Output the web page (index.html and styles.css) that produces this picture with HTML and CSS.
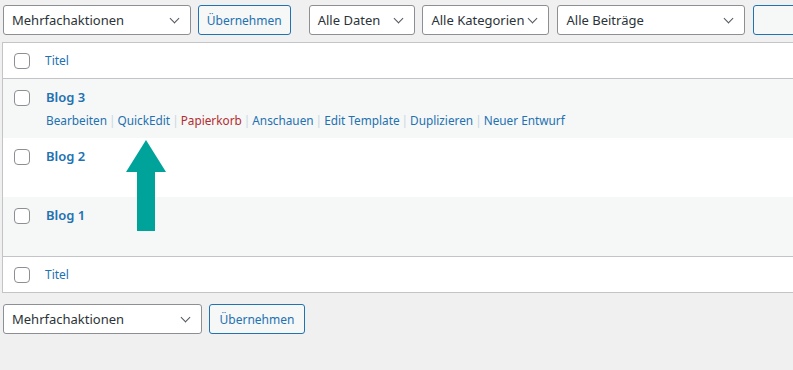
FILE: index.html
```html
<!DOCTYPE html>
<html lang="de">
<head>
  <meta charset="UTF-8">
  <meta name="viewport" content="width=device-width, initial-scale=1.0">
  <title>Beiträge</title>
  <link rel="stylesheet" href="styles.css">
</head>
<body>
  <div class="page">
    <div class="tablenav top">
      <div class="select wide">Mehrfachaktionen</div>
      <button class="button">Übernehmen</button>
      <div class="select dates">Alle Daten</div>
      <div class="select cats">Alle Kategorien</div>
      <div class="select posts">Alle Beiträge</div>
      <button class="button stub"></button>
    </div>

    <div class="list">
      <div class="row head">
        <span class="check"></span>
        <span class="col-title">Titel</span>
      </div>

      <div class="row item alt">
        <span class="check"></span>
        <div class="col-title">
          <a class="title">Blog 3</a>
          <div class="actions"><a>Bearbeiten</a><span class="sep">|</span><a>QuickEdit</a><span class="sep">|</span><a class="trash">Papierkorb</a><span class="sep">|</span><a>Anschauen</a><span class="sep">|</span><a>Edit Template</a><span class="sep">|</span><a>Duplizieren</a><span class="sep">|</span><a>Neuer Entwurf</a></div>
        </div>
      </div>

      <div class="row item">
        <span class="check"></span>
        <div class="col-title"><a class="title">Blog 2</a></div>
      </div>

      <div class="row item alt">
        <span class="check"></span>
        <div class="col-title"><a class="title">Blog 1</a></div>
      </div>

      <div class="row head foot">
        <span class="check"></span>
        <span class="col-title">Titel</span>
      </div>
    </div>

    <div class="tablenav bottom">
      <div class="select wide">Mehrfachaktionen</div>
      <button class="button">Übernehmen</button>
    </div>

    <!-- hint arrow pointing at QuickEdit -->
    <svg class="arrow" width="42" height="92" viewBox="0 0 42 92">
      <polygon points="21,0 41,32 30,32 30,91 12,91 12,32 1,32" fill="#00a39a"/>
    </svg>
  </div>
</body>
</html>
```

FILE: styles.css
```css
body {
  margin: 0;
  background: #f0f0f1;
  overflow: hidden;
  font-family: "Noto Sans", "Open Sans", sans-serif;
  font-size: 12px;
  color: #2c3338;
}

.page {
  position: relative;
  width: 860px;
  padding-left: 2px;
}

.tablenav {
  display: flex;
  align-items: center;
  white-space: nowrap;
}

.tablenav.top {
  padding: 5px 0 0 1px;
  margin-bottom: 7px;
}

.tablenav.bottom {
  padding: 11px 0 0 1px;
}

.select {
  box-sizing: border-box;
  height: 30px;
  line-height: 28px;
  padding: 0 24px 0 8px;
  background: #fff;
  border: 1px solid #8c8f94;
  border-radius: 3px;
  font-size: 13px;
  color: #2c3338;
  position: relative;
  margin-right: 7px;
}

.select::after {
  content: "";
  position: absolute;
  right: 12px;
  top: 9px;
  width: 6px;
  height: 6px;
  border-right: 1.4px solid #50575e;
  border-bottom: 1.4px solid #50575e;
  transform: rotate(45deg);
}

.select.wide { width: 199px; }
.select.dates { width: 112px; }
.select.cats { width: 129px; margin-right: 8px; }
.select.posts { width: 199px; margin-right: 8px; }

.button {
  box-sizing: border-box;
  height: 30px;
  padding: 0 8px;
  background: #f6f7f7;
  border: 1px solid #2271b1;
  border-radius: 3px;
  color: #2271b1;
  font-family: inherit;
  font-size: 12px;
  width: 96px;
  margin-right: 18px;
}

.list {
  background: #fff;
  border: 1px solid #c3c4c7;
  border-right: none;
}

.row {
  display: flex;
  align-items: flex-start;
}

.row.head {
  height: 35px;
  align-items: center;
  border-bottom: 1px solid #c3c4c7;
}

.row.foot {
  border-bottom: none;
  border-top: 1px solid #c3c4c7;
}

.row.item {
  height: 59px;
}

.row.alt {
  background: #f6f7f7;
}

.check {
  box-sizing: border-box;
  width: 16px;
  height: 16px;
  border: 1px solid #8c8f94;
  border-radius: 4px;
  background: #fff;
  margin: 0 15px 0 11px;
  flex-shrink: 0;
}

.row.item .check {
  margin-top: 11px;
}

.head .col-title {
  color: #2271b1;
  font-size: 12px;
}

.item .col-title {
  padding-top: 8px;
  padding-left: 1px;
}

.title {
  color: #2271b1;
  font-weight: 600;
  font-size: 13px;
  line-height: 20px;
}

.actions {
  margin-top: 4px;
  font-size: 11.8px;
  line-height: 18px;
}

.actions a {
  color: #2271b1;
}

.actions a.trash {
  color: #b32d2e;
}

.sep {
  color: #c8d7e1;
  margin: 0 2px;
}

.arrow {
  position: absolute;
  left: 125px;
  top: 140px;
}
```
